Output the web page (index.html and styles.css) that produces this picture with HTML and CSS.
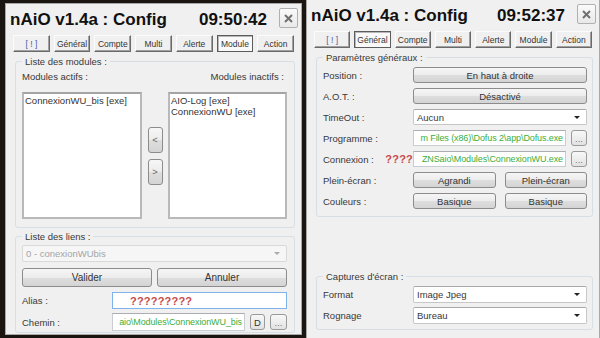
FILE: index.html
```html
<!DOCTYPE html>
<html lang="fr">
<head>
<meta charset="UTF-8" />
<title>nAiO v1.4a : Config</title>
<link rel="stylesheet" href="styles.css">
</head>
<body>
<div class="desk">

  <!-- Fenetre de gauche : onglet Module -->
  <div class="win win-left">
    <div class="head">
      <span class="title">nAiO v1.4a : Config</span>
      <span class="clock">09:50:42</span>
      <span class="close"><svg width="9" height="9" viewBox="0 0 9 9"><path d="M1 1L8 8M8 1L1 8" stroke="#707070" stroke-width="2"/></svg></span>
    </div>
    <div class="tabs">
      <span class="tab tab-warn">[ ! ]</span>
      <span class="tab">Général</span>
      <span class="tab">Compte</span>
      <span class="tab">Multi</span>
      <span class="tab">Alerte</span>
      <span class="tab tab-on">Module</span>
      <span class="tab">Action</span>
    </div>

    <fieldset class="group group-modules">
      <legend>Liste des modules :</legend>
      <div class="list-labels">
        <span>Modules actifs :</span>
        <span>Modules inactifs :</span>
      </div>
      <div class="lists">
        <div class="listbox listbox-left">
          <div>ConnexionWU_bis [exe]</div>
        </div>
        <div class="move">
          <span class="btn btn-move">&lt;</span>
          <span class="btn btn-move">&gt;</span>
        </div>
        <div class="listbox">
          <div>AIO-Log [exe]</div>
          <div>ConnexionWU [exe]</div>
        </div>
      </div>
    </fieldset>

    <fieldset class="group group-links">
      <legend>Liste des liens :</legend>
      <div class="combo combo-off">
        <span>0 - conexionWUbis</span>
        <span class="arrow arrow-off"></span>
      </div>
      <div class="btn-row">
        <span class="btn">Valider</span>
        <span class="btn">Annuler</span>
      </div>
      <div class="field-row row-alias">
        <span class="field-label">Alias :</span>
        <div class="textbox textbox-focus"><span class="unknown">?????????</span></div>
      </div>
      <div class="field-row row-path">
        <span class="field-label">Chemin :</span>
        <div class="textbox textbox-path"><span class="path">aio\Modules\ConnexionWU_bis</span></div>
        <span class="btn btn-small">D</span>
        <span class="btn btn-small btn-dots">...</span>
      </div>
    </fieldset>
  </div>

  <!-- Fenetre de droite : onglet General -->
  <div class="win win-right">
    <div class="head">
      <span class="title">nAiO v1.4a : Config</span>
      <span class="clock">09:52:37</span>
      <span class="close"><svg width="9" height="9" viewBox="0 0 9 9"><path d="M1 1L8 8M8 1L1 8" stroke="#707070" stroke-width="2"/></svg></span>
    </div>
    <div class="tabs">
      <span class="tab tab-warn">[ ! ]</span>
      <span class="tab tab-on">Général</span>
      <span class="tab">Compte</span>
      <span class="tab">Multi</span>
      <span class="tab">Alerte</span>
      <span class="tab">Module</span>
      <span class="tab">Action</span>
    </div>

    <fieldset class="group group-params">
      <legend>Paramètres généraux :</legend>
      <div class="param">
        <span class="param-label">Position :</span>
        <span class="btn">En haut à droite</span>
      </div>
      <div class="param">
        <span class="param-label">A.O.T. :</span>
        <span class="btn">Désactivé</span>
      </div>
      <div class="param">
        <span class="param-label">TimeOut :</span>
        <div class="combo"><span>Aucun</span><span class="arrow"></span></div>
      </div>
      <div class="param">
        <span class="param-label">Programme :</span>
        <div class="textbox textbox-path"><span class="path">m Files (x86)\Dofus 2\app\Dofus.exe</span></div>
        <span class="btn btn-small btn-dots">...</span>
      </div>
      <div class="param">
        <span class="param-label">Connexion : <span class="unknown">????</span></span>
        <div class="textbox textbox-path"><span class="path">ZNSaio\Modules\ConnexionWU.exe</span></div>
        <span class="btn btn-small btn-dots">...</span>
      </div>
      <div class="param">
        <span class="param-label">Plein-écran :</span>
        <div class="pair">
          <span class="btn">Agrandi</span>
          <span class="btn">Plein-écran</span>
        </div>
      </div>
      <div class="param">
        <span class="param-label">Couleurs :</span>
        <div class="pair">
          <span class="btn">Basique</span>
          <span class="btn">Basique</span>
        </div>
      </div>
    </fieldset>

    <fieldset class="group group-shots">
      <legend>Captures d'écran :</legend>
      <div class="param param-tall">
        <span class="param-label">Format</span>
        <div class="combo"><span>Image Jpeg</span><span class="arrow"></span></div>
      </div>
      <div class="param param-tall">
        <span class="param-label">Rognage</span>
        <div class="combo"><span>Bureau</span><span class="arrow"></span></div>
      </div>
    </fieldset>
  </div>

</div>
</body>
</html>
```

FILE: styles.css
```css
* {
  box-sizing: border-box;
}
body {
  margin: 0;
  height: 338px;
  overflow: hidden;
  background-color: #1b1511;
  font-family: "Liberation Sans", Arial, sans-serif;
  font-size: 9.5px;
  color: #383838;
}
.desk {
  display: flex;
  gap: 4px;
  padding-left: 5px;
  height: 338px;
}
.win {
  flex: none;
  display: flex;
  flex-direction: column;
  background-color: #f0f0f0;
  border: 1px solid #a8a8a8;
}
.win-left {
  width: 297px;
  height: 332px;
  margin-top: 3px;
}
.win-right {
  width: 294px;
  height: 342px;
  margin-top: -1px;
}

/* titre + horloge */
.head {
  display: flex;
  align-items: flex-start;
  padding: 4px 3px 0 4px;
}
.title,
.clock {
  font-size: 17px;
  font-weight: 700;
  line-height: 20px;
  margin-top: 2px;
  color: #111;
}
.clock {
  margin-left: auto;
  margin-right: 12px;
}
.close {
  width: 19px;
  height: 20px;
  display: flex;
  align-items: center;
  justify-content: center;
  border: 1px solid #b0b0b0;
  border-radius: 2px;
  background: linear-gradient(#fafafa, #e9e9e9);
}

/* onglets */
.tabs {
  display: flex;
  gap: 4px;
  margin: 5px 7px 0 7px;
}
.tab {
  flex: 1;
  height: 17px;
  display: flex;
  align-items: center;
  justify-content: center;
  font-size: 8.5px;
  background-color: #f0f0f0;
  border: 1px solid;
  border-color: #fcfcfc #6a6a6a #6a6a6a #fcfcfc;
  box-shadow: inset -1px -1px 0 #a0a0a0;
  color: #333;
}
.tab-on {
  background-color: #f9f9f9;
  border-color: #5c5c5c;
  box-shadow: inset 1px 1px 0 #b8b8b8;
}
.tab-warn {
  color: #4a5aa8;
}

/* cadres */
.group {
  margin: 4px 6px 0 9px;
  padding: 4px 7px 0 6px;
  border: 1px solid #d5dfe5;
  border-radius: 3px;
  min-width: 0;
}
.group legend {
  padding: 0 3px;
  line-height: 11px;
}
.group-modules {
  padding-bottom: 8px;
}
.group-links {
  margin-top: 3px;
  padding-top: 3px;
  padding-bottom: 1px;
}
.group-params {
  padding: 4px 5px 7px 6px;
}
.group-shots {
  margin-top: 54px;
  padding: 4px 5px 5px 6px;
}

/* listes de modules */
.list-labels {
  display: flex;
  justify-content: space-between;
  padding-right: 3px;
  line-height: 11px;
}
.lists {
  display: flex;
  height: 127px;
  margin-top: 10px;
}
.listbox {
  flex: 1;
  background-color: #fff;
  border: 2px solid #b9b9b9;
  border-top-color: #a4a4a4;
  padding: 1px 1px;
  line-height: 11px;
  color: #333;
}
.listbox-left {
  flex: none;
  width: 120px;
}
.move {
  width: 26px;
  display: flex;
  flex-direction: column;
  align-items: center;
  justify-content: center;
  gap: 6px;
}

/* boutons */
.btn {
  display: flex;
  align-items: center;
  justify-content: center;
  border: 1px solid #8c8c8c;
  border-radius: 3px;
  background: linear-gradient(#f6f6f6 0%, #ececec 50%, #dedede 51%, #d4d4d4 100%);
  color: #333;
  white-space: nowrap;
}
.btn-move {
  width: 15px;
  height: 26px;
  color: #666;
}
.btn-row {
  display: flex;
  gap: 5px;
  margin-top: 6px;
}
.btn-row .btn {
  flex: 1;
  height: 19px;
  font-size: 10px;
}
.btn-small {
  flex: none;
  width: 15px;
  height: 16px;
  margin-left: 5px;
  border-color: #9a9a9a;
  background: linear-gradient(#f8f8f8, #e2e2e2);
}
.btn-dots {
  width: 16px;
  color: #777;
}
.row-path .btn-dots {
  width: 17px;
}

/* champs */
.combo {
  flex: 1;
  height: 17px;
  display: flex;
  align-items: center;
  justify-content: space-between;
  padding: 0 6px 0 3px;
  background-color: #fff;
  border: 1px solid #c6c6c6;
  border-top-color: #a8a8a8;
  border-radius: 2px;
}
.combo-off {
  flex: none;
  background-color: #f6f6f6;
  border-color: #d9d9d9;
  color: #a5a5a5;
}
.arrow {
  width: 0;
  height: 0;
  border-left: 3px solid transparent;
  border-right: 3px solid transparent;
  border-top: 3px solid #222;
}
.arrow-off {
  border-top-color: #aaa;
}
.field-row {
  display: flex;
  align-items: center;
}
.row-alias {
  margin-top: 5px;
  height: 17px;
}
.row-path {
  margin-top: 4px;
  height: 18px;
}
.field-label {
  width: 90px;
  flex: none;
}
.textbox {
  flex: 1;
  min-width: 0;
  height: 100%;
  display: flex;
  align-items: center;
  overflow: hidden;
  background-color: #fff;
  border: 1px solid #c9cdd3;
  border-top-color: #abadb3;
}
.textbox-focus {
  padding-left: 17px;
  border-color: #7eb4ea;
}
.textbox-path {
  justify-content: flex-end;
  padding-right: 2px;
}
.row-path .textbox {
  flex: none;
  width: 133px;
}
.path {
  white-space: nowrap;
  font-size: 9px;
  letter-spacing: -0.1px;
  color: #3aae3a;
}
.unknown {
  font-size: 11px;
  font-weight: 700;
  color: #c84a4a;
  letter-spacing: 0.2px;
}

/* parametres generaux */
.param {
  display: flex;
  align-items: stretch;
  height: 16px;
  margin-top: 5px;
}
.param:first-of-type {
  margin-top: 0;
}
.param-tall {
  height: 17px;
  margin-top: 4px;
}
.param-label {
  flex: none;
  width: 90px;
  display: flex;
  align-items: center;
  justify-content: space-between;
}
.param > .btn {
  flex: 1;
}
.param > .btn-small {
  flex: none;
  height: 100%;
}
.param .combo {
  height: 100%;
}
.pair {
  flex: 1;
  display: flex;
  gap: 9px;
}
.pair .btn {
  flex: 1;
}
```
